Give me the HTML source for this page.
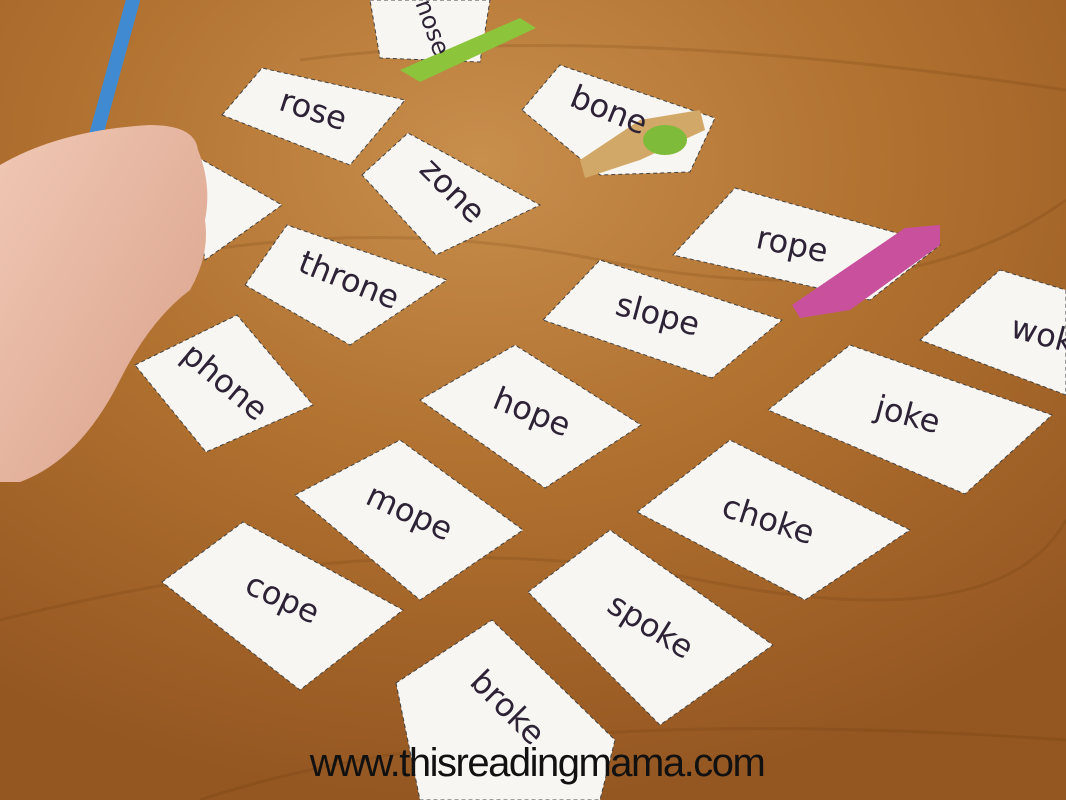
<!DOCTYPE html>
<html><head><meta charset="utf-8"><style>
html,body{margin:0;padding:0;width:1066px;height:800px;overflow:hidden;}
svg{display:block}
</style></head><body>
<svg width="1066" height="800" viewBox="0 0 1066 800" xmlns="http://www.w3.org/2000/svg">
<defs>
<radialGradient id="w1" cx="0.45" cy="0.2" r="0.8">
<stop offset="0" stop-color="#c88e4c"/><stop offset="0.5" stop-color="#b0702f"/><stop offset="1" stop-color="#955722"/>
</radialGradient>
<linearGradient id="sk" x1="0" y1="0" x2="1" y2="1"><stop offset="0" stop-color="#f0c8b4"/><stop offset="1" stop-color="#d9a08a"/></linearGradient>
</defs>
<rect width="1066" height="800" fill="url(#w1)"/>
<g opacity="0.15" stroke="#5a2e0a" stroke-width="3" fill="none">
<path d="M0 300 Q300 200 600 260 T1066 200"/><path d="M0 620 Q400 520 700 580 T1066 520"/><path d="M200 800 Q500 700 1066 740"/><path d="M300 60 Q600 20 1066 90"/>
</g>
<g fill="#f8f6f2" stroke="#444" stroke-width="1" stroke-dasharray="4 3">
<polygon points="370,0 490,0 480,62 380,58"/>
<polygon points="222,115 262,68 405,100 350,165"/>
<polygon points="522,110 560,65 715,118 690,172 600,175"/>
<polygon points="362,175 408,133 540,205 436,255"/>
<polygon points="185,150 282,205 205,260"/>
<polygon points="245,285 287,225 447,280 350,345"/>
<polygon points="673,255 735,188 940,245 870,300"/>
<polygon points="543,320 600,260 782,320 712,378"/>
<polygon points="920,340 1000,270 1066,290 1066,395"/>
<polygon points="135,365 237,315 313,405 206,452"/>
<polygon points="420,400 515,345 641,425 545,488"/>
<polygon points="768,410 850,345 1052,415 965,494"/>
<polygon points="295,495 400,440 523,530 420,600"/>
<polygon points="637,512 730,440 910,530 805,600"/>
<polygon points="162,582 243,522 403,610 300,690"/>
<polygon points="528,592 610,530 773,645 660,725"/>
<polygon points="396,683 492,620 615,740 600,800 420,800"/>
</g>
<polygon points="400,70 520,18 536,28 420,82" fill="#8cc43c"/>
<polygon points="580,160 640,120 700,110 705,130 640,160 585,178" fill="#d2a868"/>
<ellipse cx="665" cy="140" rx="22" ry="15" fill="#7fbb3a"/>
<polygon points="792,305 905,228 940,225 940,245 850,310 800,318" fill="#c8509c"/>
<g font-family="'DejaVu Sans','Liberation Sans',sans-serif" font-size="32" fill="#2e2236" text-anchor="middle">
<text transform="translate(425,30) rotate(70)" font-size="24">nose</text>
<text transform="translate(310,120) rotate(18)">rose</text>
<text transform="translate(605,120) rotate(22)">bone</text>
<text transform="translate(445,198) rotate(45)">zone</text>
<text transform="translate(345,290) rotate(22)">throne</text>
<text transform="translate(790,255) rotate(12)">rope</text>
<text transform="translate(655,325) rotate(15)">slope</text>
<text transform="translate(1040,345) rotate(15)">wok</text>
<text transform="translate(218,390) rotate(40)">phone</text>
<text transform="translate(528,422) rotate(22)">hope</text>
<text transform="translate(905,425) rotate(15)">joke</text>
<text transform="translate(405,522) rotate(25)">mope</text>
<text transform="translate(765,530) rotate(18)">choke</text>
<text transform="translate(278,608) rotate(25)">cope</text>
<text transform="translate(645,635) rotate(32)">spoke</text>
<text transform="translate(500,715) rotate(45)">broke</text>
</g>
<line x1="133" y1="0" x2="92" y2="150" stroke="#3f8ad0" stroke-width="14" stroke-linecap="round"/>
<path d="M0 165 Q60 130 150 125 Q195 125 198 150 Q212 185 205 220 Q210 255 190 290 Q150 320 120 380 Q80 460 20 482 L0 482 Z" fill="url(#sk)"/>
<text x="537" y="776" text-anchor="middle" font-family="'Liberation Sans',sans-serif" font-size="40" fill="#111" letter-spacing="-1.5">www.thisreadingmama.com</text>
</svg>
</body></html>
